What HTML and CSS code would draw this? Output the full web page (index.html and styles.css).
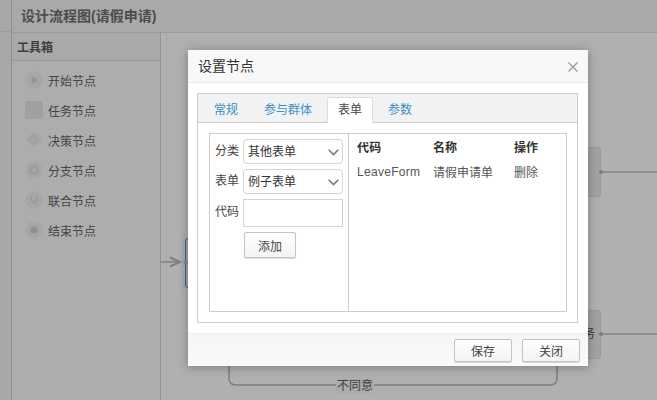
FILE: index.html
```
<!DOCTYPE html>
<html lang="zh">
<head>
<meta charset="utf-8">
<title>设计流程图</title>
<link rel="stylesheet" href="styles.css">
</head>
<body>
<div class="page">
  <div class="side-strip"></div>
  <div class="app">
    <header class="app-head">设计流程图(请假申请)</header>
    <div class="app-body">
      <aside class="toolbox">
        <div class="toolbox-title">工具箱</div>
        <ul class="tools">
          <li class="tool"><svg class="ico" viewBox="0 0 20 20"><circle cx="10" cy="10" r="9.5" fill="#a6a6a6"/><path d="M7.5 5.5 14.5 10 7.5 14.5Z" fill="#949494"/></svg>开始节点</li>
          <li class="tool"><svg class="ico" viewBox="0 0 20 20"><rect x="0" y="0" width="20" height="20" fill="#a0a0a0"/></svg>任务节点</li>
          <li class="tool"><svg class="ico" viewBox="0 0 20 20"><path d="M10 1 19 9 10 18 1 9Z" fill="#a4a4a4"/></svg>决策节点</li>
          <li class="tool"><svg class="ico" viewBox="0 0 20 20"><circle cx="10" cy="10" r="9.5" fill="#a6a6a6"/><circle cx="10" cy="10" r="4" fill="none" stroke="#979797" stroke-width="2"/></svg>分支节点</li>
          <li class="tool"><svg class="ico" viewBox="0 0 20 20"><circle cx="10" cy="10" r="9.5" fill="#a6a6a6"/><path d="M7 6v4l3 3 3-3V6" fill="none" stroke="#979797" stroke-width="1.5"/></svg>联合节点</li>
          <li class="tool"><svg class="ico" viewBox="0 0 20 20"><circle cx="10" cy="10" r="9.5" fill="#a6a6a6"/><circle cx="10" cy="10" r="4" fill="#8f8f8f"/></svg>结束节点</li>
        </ul>
      </aside>
      <main class="canvas">
        <div class="node node-left"></div>
        <div class="node node-top"></div>
        <div class="node node-bottom"><span class="node-text">务</span></div>
        <svg class="edges" width="496" height="367" viewBox="0 0 496 367">
          <path d="M0 229H19" stroke="#808080" stroke-width="1.500" fill="none"/>
          <path d="M9 224.500 19 229 9 233.500" stroke="#808080" stroke-width="2" fill="none"/>
          <path d="M440 139H496" stroke="#6e6e6e" fill="none"/>
          <path d="M440 301H496" stroke="#6e6e6e" fill="none"/>
          <path d="M68 333V345Q68 352 75 352H389Q396 352 396 345V333" stroke="#7c7c7c" stroke-width="1.500" fill="none"/>
          <circle cx="440" cy="139" r="2" fill="#7c7c7c"/>
          <circle cx="440" cy="301" r="2" fill="#7c7c7c"/>
          <circle cx="24.500" cy="229" r="2" fill="#7c8c7c"/>
        </svg>
        <span class="edge-label">不同意</span>
      </main>
    </div>
  </div>

  <section class="dialog">
    <header class="dialog-head">
      <h2 class="dialog-title">设置节点</h2>
      <svg class="dialog-close" width="10" height="10" viewBox="0 0 10 10"><path d="M.5.5l9 9M9.500.5l-9 9" stroke="#9a9a9a" stroke-width="1.300" fill="none"/></svg>
    </header>
    <div class="dialog-body">
      <div class="tabbox">
        <nav class="tabs">
          <a class="tab">常规</a>
          <a class="tab">参与群体</a>
          <a class="tab tab-active">表单</a>
          <a class="tab">参数</a>
        </nav>
        <div class="tab-panel">
          <div class="split">
            <form class="form-col">
              <div class="field"><label class="lbl">分类</label><div class="select">其他表单<svg class="chev" width="11" height="7" viewBox="0 0 11 7"><path d="M.7.8l4.800 4.800L10.300.8" stroke="#777" stroke-width="1.500" fill="none"/></svg></div></div>
              <div class="field"><label class="lbl">表单</label><div class="select">例子表单<svg class="chev" width="11" height="7" viewBox="0 0 11 7"><path d="M.7.8l4.800 4.800L10.300.8" stroke="#777" stroke-width="1.500" fill="none"/></svg></div></div>
              <div class="field"><label class="lbl lbl-tall">代码</label><div class="input"></div></div>
              <div class="add-row"><button type="button" class="btn btn-add">添加</button></div>
            </form>
            <div class="table-col">
              <div class="trow thead"><span class="c1">代码</span><span class="c2">名称</span><span class="c3">操作</span></div>
              <div class="trow"><span class="c1">LeaveForm</span><span class="c2">请假申请单</span><span class="c3">删除</span></div>
            </div>
          </div>
        </div>
      </div>
    </div>
    <footer class="dialog-foot">
      <button type="button" class="btn btn-foot">保存</button>
      <button type="button" class="btn btn-foot">关闭</button>
    </footer>
  </section>
</div>
</body>
</html>
```
FILE: styles.css
```
* { box-sizing: border-box; }
html, body { margin: 0; padding: 0; }
body {
  width: 657px;
  height: 400px;
  overflow: hidden;
  font-family: "Liberation Sans", "Noto Sans CJK SC", sans-serif;
  font-size: 12px;
  color: #333;
  background: #acacac;
}
.page {
  position: relative;
  display: flex;
  width: 657px;
  height: 400px;
  overflow: hidden;
}
.side-strip {
  width: 12px;
  background: linear-gradient(#a8a8a8 31px, #9c9c9c 31px, #9c9c9c 32px, #a8a8a8 32px);
  border-right: 1px solid #8e8e8e;
}
.app { flex: 1; display: flex; flex-direction: column; background: #b0b0b0; }
.app-head {
  height: 33px;
  padding: 7px 0 0 9px;
  font-size: 14px;
  font-weight: bold;
  line-height: 18px;
  color: #4c4c4c;
  background: #a9a9a9;
  border-bottom: 1px solid #9b9b9b;
}
.app-body { flex: 1; display: flex; }
.toolbox {
  width: 149px;
  background: #adadad;
  border-right: 1px solid #939393;
}
.toolbox-title {
  height: 28px;
  padding: 7px 0 0 5px;
  font-size: 12px;
  font-weight: bold;
  line-height: 16px;
  color: #3f3f3f;
  background: #a9a9a9;
  border-bottom: 1px solid #969696;
}
.tools { list-style: none; margin: 0; padding: 4px 0 0 13px; }
.tool {
  display: flex;
  align-items: center;
  gap: 5px;
  height: 30px;
  color: #444;
}
.ico { width: 18px; height: 18px; flex: none; }
.canvas { position: relative; flex: 1; background: #b0b0b0; }
.canvas::before {
  content: "";
  position: absolute;
  left: 5px;
  top: 0;
  bottom: 0;
  width: 1px;
  background: #a8a8a8;
}
.edges { position: absolute; left: 0; top: 0; }
.node { position: absolute; border: 1px solid #999; background: #a3a3a3; border-radius: 3px; }
.node-left {
  left: 24px;
  top: 205px;
  width: 30px;
  height: 50px;
  border-color: #3f6a8a;
  box-shadow: -2px 0 2px rgba(120,170,210,.5);
}
.node-top { left: 400px; top: 114px; width: 40px; height: 50px; }
.node-bottom { left: 400px; top: 277px; width: 40px; height: 49px; }
.node-text { position: absolute; left: 21px; top: 15px; line-height: 16px; color: #333; }
.edge-label { position: absolute; left: 175px; top: 345px; padding: 0 1px; background: #acacac; color: #3c3c3c; line-height: 16px; }
.dialog {
  position: absolute;
  left: 188px;
  top: 50px;
  width: 400px;
  height: 316px;
  display: flex;
  flex-direction: column;
  background: #fff;
  box-shadow: 0 1px 10px rgba(0,0,0,.3);
}
.dialog-head {
  display: flex;
  align-items: center;
  justify-content: space-between;
  height: 33px;
  padding: 0 10px 1px;
  background: #f8f8f8;
  border-bottom: 1px solid #e9e9e9;
}
.dialog-title { margin: 0; font-size: 14px; font-weight: normal; line-height: 18px; color: #333; }
.dialog-close { margin-top: 3px; }
.dialog-body { flex: 1; padding: 10px 10px 10px 9px; }
.tabbox { height: 100%; border: 1px solid #ccc; background: #fff; display: flex; flex-direction: column; }
.tabs {
  display: flex;
  height: 29px;
  padding: 3px 0 0 3px;
  background: #f2f2f2;
  border-bottom: 1px solid #ccc;
}
.tab {
  display: block;
  padding: 0 10px;
  height: 26px;
  margin: 0 2px;
  line-height: 25px;
  color: #3a8fc7;
  border: 1px solid transparent;
  border-bottom: 0;
}
.tab-active {
  background: #fff;
  color: #444;
  border-color: #ddd;
  border-radius: 3px 3px 0 0;
  height: 26px;
}
.tab-panel { flex: 1; padding: 10px 10px 10px 11px; }
.split { display: flex; height: 100%; border: 1px solid #ccc; }
.form-col { width: 139px; padding: 5px 5px 0 5px; border-right: 1px solid #ccc; }
.field { display: flex; align-items: flex-start; gap: 4px; height: 30px; }
.lbl { width: 24px; flex: none; line-height: 24px; color: #444; }
.lbl-tall { line-height: 26px; }
.select, .input {
  position: relative;
  flex: 1;
  height: 25px;
  padding: 1px 0 0 4px;
  line-height: 23px;
  border: 1px solid #d4d4d4;
  border-radius: 4px;
  color: #333;
  font-size: 12px;
}
.input { height: 28px; border-radius: 0; }
.chev { position: absolute; right: 3px; top: 9px; }
.add-row { padding: 3px 0 0 29px; }
.btn {
  font: inherit;
  color: #444;
  background: linear-gradient(#fff, #f3f3f3);
  border: 1px solid #c4c4c4;
  border-radius: 2px;
  box-shadow: 0 1px 1px rgba(0,0,0,.15);
  padding: 0;
}
.btn-add { width: 52px; height: 26px; }
.table-col { flex: 1; }
.trow { display: flex; height: 25px; align-items: center; color: #555; }
.thead { font-weight: bold; color: #333; }
.c1 { width: 84px; padding-left: 8px; flex: none; letter-spacing: .3px; }
.c2 { width: 81px; flex: none; }
.c3 { flex: 1; }
.dialog-foot {
  display: flex;
  justify-content: flex-end;
  align-items: center;
  gap: 10px;
  height: 33px;
  padding: 0 8px;
  background: linear-gradient(#f6f6f6, #fafafa);
  border-top: 1px solid #eee;
}
.btn-foot { width: 58px; height: 23px; }
```
